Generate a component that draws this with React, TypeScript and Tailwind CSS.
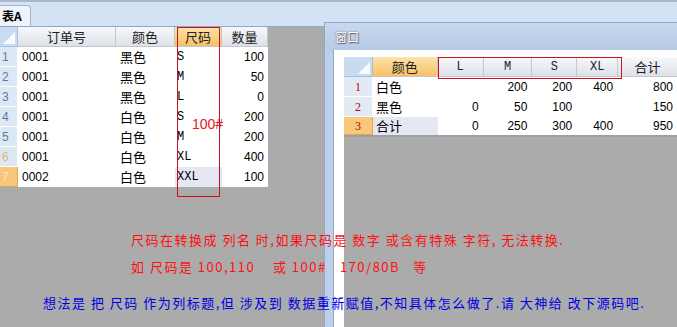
const cjk = { fontFamily: '"Noto Sans CJK SC", "Liberation Sans", sans-serif' };
const mono = { fontFamily: '"Liberation Mono", "Noto Sans CJK SC", monospace' };

const leftRows = [
  ["0001", "黑色", "S", "100"],
  ["0001", "黑色", "M", "50"],
  ["0001", "黑色", "L", "0"],
  ["0001", "白色", "S", "200"],
  ["0001", "白色", "M", "200"],
  ["0001", "白色", "XL", "400"],
  ["0002", "白色", "XXL", "100"],
];

const rightRows = [
  ["白色", "", "200", "200", "400", "800"],
  ["黑色", "0", "50", "100", "", "150"],
  ["合计", "0", "250", "300", "400", "950"],
];

function Corner({ w }: { w: string }) {
  return (
    <div className={`${w} h-[20px] bg-[#c9dbf0] border-r border-b border-[#a9bfdc] relative`}>
      <div className="absolute right-[2px] bottom-[2px] w-0 h-0 border-l-[12px] border-l-transparent border-b-[12px] border-b-white/90" />
    </div>
  );
}

function Head({ label, w, active, monoFont }: { label: string; w: string; active?: boolean; monoFont?: boolean }) {
  return (
    <div
      className={`${w} h-[20px] flex items-center justify-center text-[13px] text-[#222] border-r border-b border-[#c3c8d0] ${
        active ? "bg-gradient-to-b from-[#fde3a8] to-[#f8c064]" : "bg-gradient-to-b from-[#f7f8fa] to-[#dde1e8]"
      }`}
      style={monoFont ? { ...mono, fontSize: 12 } : cjk}
    >
      {label}
    </div>
  );
}

function LeftGrid() {
  return (
    <div className="flex flex-col w-[268px] bg-white">
      <div className="flex">
        <Corner w="w-[18px]" />
        <Head label="订单号" w="w-[98px]" />
        <Head label="颜色" w="w-[59px]" />
        <Head label="尺码" w="w-[47px]" active />
        <Head label="数量" w="w-[46px]" />
      </div>
      {leftRows.map((r, i) => {
        const last = i === leftRows.length - 1;
        return (
          <div key={i} className="flex h-[20px] items-center">
            <div
              className={`w-[18px] h-[20px] flex items-center pl-[2px] text-[12px] border-b border-r ${
                last
                  ? "bg-[#f9c77a] text-[#fbe7c2] border-[#e0a850]"
                  : i === 5
                  ? "bg-[#dde8f5] text-[#e6b76a] border-white"
                  : "bg-[#dde8f5] text-[#5a7aa5] border-white"
              }`}
              style={{ fontFamily: '"Liberation Sans", sans-serif' }}
            >
              {i + 1}
            </div>
            <div className="w-[98px] pl-[4px] text-[12px] text-black" style={{ fontFamily: '"Liberation Sans", sans-serif' }}>
              {r[0]}
            </div>
            <div className="w-[59px] pl-[4px] text-[13px] text-black" style={cjk}>
              {r[1]}
            </div>
            <div
              className={`w-[47px] h-[20px] flex items-center pl-[2px] text-[12px] text-black ${last ? "bg-[#e5e8f2]" : ""}`}
              style={mono}
            >
              {r[2]}
            </div>
            <div className="w-[46px] pr-[4px] text-right text-[12px] text-black" style={{ fontFamily: '"Liberation Sans", sans-serif' }}>
              {r[3]}
            </div>
          </div>
        );
      })}
    </div>
  );
}

function RightGrid() {
  const widths = ["w-[65px]", "w-[46px]", "w-[49px]", "w-[45px]", "w-[41px]", "w-[60px]"];
  return (
    <div className="flex flex-col bg-white w-[334px]">
      <div className="flex">
        <Corner w="w-[29px]" />
        <Head label="颜色" w="w-[65px]" active />
        <Head label="L" w="w-[46px]" monoFont />
        <Head label="M" w="w-[49px]" monoFont />
        <Head label="S" w="w-[45px]" monoFont />
        <Head label="XL" w="w-[41px]" monoFont />
        <Head label="合计" w="w-[60px]" />
      </div>
      {rightRows.map((r, i) => {
        const last = i === rightRows.length - 1;
        return (
          <div key={i} className={`flex h-[20px] items-center ${last ? "border-b-2 border-[#9aa0a8]" : ""}`}>
            <div
              className={`w-[29px] h-full flex items-center justify-center text-[12px] text-[#c00000] border-r border-b ${
                last ? "bg-[#f9c77a] border-[#e0a850]" : "bg-[#e2eaf6] border-white"
              }`}
              style={{ fontFamily: '"Liberation Serif", serif' }}
            >
              {i + 1}
            </div>
            {r.map((c, j) =>
              j === 0 ? (
                <div
                  key={j}
                  className={`${widths[j]} h-full flex items-center pl-[3px] text-[13px] text-black ${last ? "bg-[#e5e8f2]" : ""}`}
                  style={cjk}
                >
                  {c}
                </div>
              ) : (
                <div
                  key={j}
                  className={`${widths[j]} pr-[5px] text-right text-[12px] text-black`}
                  style={{ fontFamily: '"Liberation Sans", sans-serif' }}
                >
                  {c}
                </div>
              )
            )}
          </div>
        );
      })}
    </div>
  );
}

export default function App() {
  return (
    <div className="relative w-[677px] h-[327px] bg-[#ababab] overflow-hidden">
      {/* top tab strip */}
      <div className="h-[27px] bg-[#d3e2f5] border-t-2 border-[#a8b9cf] border-b border-b-[#8ea7c8] flex items-end">
        <div
          className="w-[31px] h-[21px] bg-[#eef4fb] border-r border-t border-[#9fb5d2] rounded-tr-[4px] flex items-center pl-[2px] text-[12px] font-bold text-black"
          style={cjk}
        >
          表A
        </div>
      </div>

      <LeftGrid />

      {/* window */}
      <div className="absolute left-[324px] top-[22px] right-[-20px] bottom-0 bg-[#bcd0ea] border-l border-t border-[#8fa6c4] flex flex-col">
        <div className="h-[27px] flex items-center pl-[10px] bg-gradient-to-b from-[#c8d9ef] to-[#b7cbe6]">
          <span className="text-[12px] text-white" style={{ ...cjk, textShadow: "0 0 2px #556, 1px 1px 1px #667" }}>
            窗口
          </span>
        </div>
        <div className="flex-1 ml-[8px] bg-white border-l border-[#8fa6c4] pl-[10px] pt-[7px] flex">
          <div className="flex-1 bg-[#ababab] flex flex-col">
            <RightGrid />
          </div>
        </div>
        {/* red outline around size headers */}
        <div className="absolute left-[113px] top-[34px] w-[184px] h-[22px] border border-[#d01020]" />
      </div>

      {/* red outline around 尺码 column */}
      <div className="absolute left-[177px] top-[27px] w-[43px] h-[170px] border border-[#c81020]">
        <span className="absolute left-[14px] top-[86px] text-[14px] text-[#e02020]" style={{ fontFamily: '"Liberation Sans", sans-serif' }}>
          100#
        </span>
      </div>

      {/* notes */}
      <div className="absolute left-0 top-[230px] w-full flex flex-col text-[13px] leading-[20px] tracking-[1.5px]" style={cjk}>
        <div className="pl-[131px] text-[#ff1010]">尺码在转换成 列名 时,如果尺码是 数字 或含有特殊 字符, 无法转换.</div>
        <div className="pl-[131px] mt-[7px] text-[#ff1010] whitespace-pre">如 尺码是 100,110    或 100#   170/80B   等</div>
        <div className="pl-[43px] mt-[16px] text-[#0000e0]">想法是 把 尺码 作为列标题,但 涉及到 数据重新赋值,不知具体怎么做了.请 大神给 改下源码吧.</div>
      </div>
    </div>
  );
}
